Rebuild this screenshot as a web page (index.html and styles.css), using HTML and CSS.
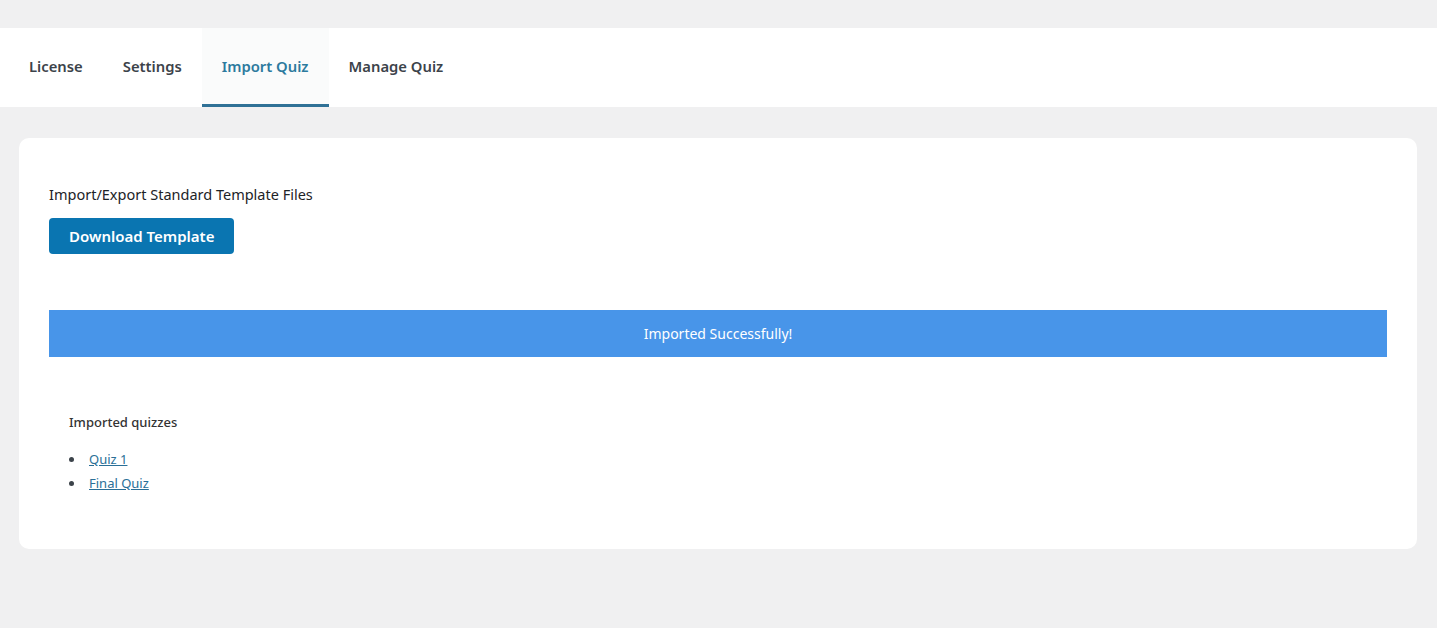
FILE: index.html
```html
<!DOCTYPE html>
<html lang="en">
<head>
    <meta charset="UTF-8">
    <meta name="viewport" content="width=device-width, initial-scale=1.0">
    <title>Quiz Import</title>
    <link rel="stylesheet" href="styles.css">
</head>
<body>
    <nav class="tabs">
        <a class="tab" href="#">License</a>
        <a class="tab" href="#">Settings</a>
        <a class="tab active" href="#">Import Quiz</a>
        <a class="tab" href="#">Manage Quiz</a>
    </nav>

    <div class="card">
        <p class="label">Import/Export Standard Template Files</p>
        <button class="btn" type="button">Download Template</button>

        <div class="notice">Imported Successfully!</div>

        <div class="imported">
            <h4>Imported quizzes</h4>
            <ul>
                <li><a href="#">Quiz 1</a></li>
                <li><a href="#">Final Quiz</a></li>
            </ul>
        </div>
    </div>
</body>
</html>
```

FILE: styles.css
```css
body {
    font-family: "Noto Sans", "Open Sans", sans-serif;
    background-color: #f0f0f1;
    color: #1d2327;
    margin: 0;
    padding: 28px 0 0;
}

.tabs {
    display: flex;
    background-color: #fff;
    padding-left: 9px;
    height: 79px;
}

.tab {
    display: flex;
    align-items: center;
    padding: 0 20px;
    font-size: 14.8px;
    font-weight: 600;
    color: #3c434a;
    text-decoration: none;
    border-bottom: 3px solid transparent;
    box-sizing: border-box;
}

.tab.active {
    color: #2c7a9e;
    background-color: #fafbfb;
    border-bottom-color: #2f7196;
}

.card {
    background-color: #fff;
    border-radius: 10px;
    margin: 31px 20px 0 19px;
    padding: 46px 30px 54px;
}

.label {
    margin: 0 0 14px;
    font-size: 14.5px;
}

.btn {
    font-family: inherit;
    font-size: 15px;
    font-weight: 600;
    color: #fff;
    background-color: #0a75b1;
    border: none;
    border-radius: 4px;
    height: 36px;
    padding: 0 20px;
    cursor: pointer;
}

.notice {
    margin-top: 56px;
    background-color: #4895e9;
    color: #fff;
    font-size: 14px;
    text-align: center;
    height: 47px;
    line-height: 47px;
}

.imported {
    padding: 56px 20px 0;
}

.imported h4 {
    margin: 0 0 16px;
    font-size: 13px;
    font-weight: 500;
    color: #333;
}

.imported ul {
    margin: 0;
    padding: 0;
    list-style: none;
    font-size: 13px;
    line-height: 24px;
}

.imported li {
    display: flex;
    align-items: center;
    gap: 15px;
}

.imported li::before {
    content: "";
    width: 5px;
    height: 5px;
    border-radius: 50%;
    background-color: #3c434a;
}

.imported a {
    color: #2a6f97;
}
```
